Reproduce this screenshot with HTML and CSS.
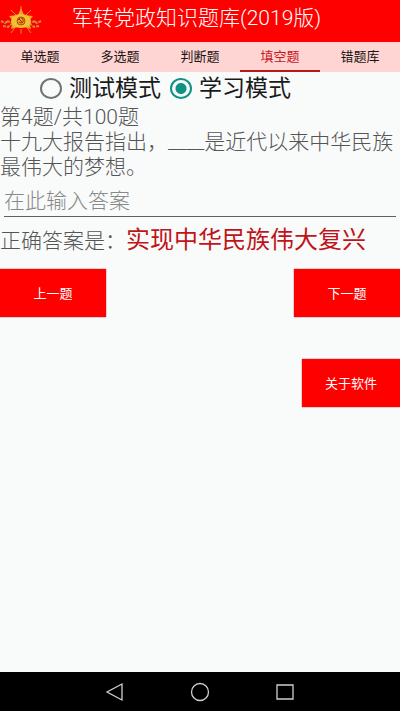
FILE: index.html
```html
<!DOCTYPE html>
<html lang="zh-CN">
<head>
    <meta charset="UTF-8">
    <meta name="viewport" content="width=device-width, initial-scale=1.0">
    <title>军转党政知识题库(2019版)</title>
    <link rel="stylesheet" href="styles.css">
</head>
<body>
    <header class="app-bar">
        <svg class="logo" viewBox="0 0 42 32" aria-hidden="true">
            <g fill="none" stroke="#d08a3c" stroke-width="2" stroke-dasharray="3 1">
                <path d="M1 19l4 2 3-2M3 24l5 1 4-3M7 19l5 2"/>
                <path d="M41 19l-4 2-3-2M39 24l-5 1-4-3M35 19l-5 2"/>
            </g>
            <path fill="none" stroke="#d98a2c" d="M21 4v6M11 8l5 5M31 8l-5 5M11 31l5-7M31 31l-5-7M21 32v-5"/>
            <path fill="#e8a32c" d="M21 6l3 7 9 1-4 5 2 8-10-3-10 3 2-8-4-5 9-1z"/>
            <ellipse cx="21" cy="19" rx="10" ry="7" fill="#f4c030"/>
            <circle cx="21" cy="19" r="4" fill="#e8a01c" stroke="#a8501a"/>
            <path d="M19 17l4 4M18 18l2-2M21 16c3 0 3 5 0 5l-2-1" fill="none" stroke="#b02a10"/>
        </svg>
        <h1>军转党政知识题库(2019版)</h1>
    </header>

    <nav class="tabs">
        <a href="#single">单选题</a>
        <a href="#multiple">多选题</a>
        <a href="#judge">判断题</a>
        <a href="#blank" class="active">填空题</a>
        <a href="#wrong">错题库</a>
    </nav>

    <main class="content">
        <div class="modes">
            <label><input type="radio" name="mode" value="test">测试模式</label>
            <label><input type="radio" name="mode" value="study" checked>学习模式</label>
        </div>

        <p class="question">第4题/共100题</p>
        <label class="question" for="answer">十九大报告指出，____是近代以来中华民族最伟大的梦想。</label>
        <div class="answer-field">
            <input type="text" id="answer" placeholder="在此输入答案">
        </div>
        <p class="result">正确答案是：<span class="correct">实现中华民族伟大复兴</span></p>

        <div class="pager">
            <button type="button">上一题</button>
            <button type="button">下一题</button>
        </div>
        <div class="about">
            <button type="button">关于软件</button>
        </div>
    </main>

    <footer class="nav-bar">
        <button type="button" aria-label="返回">
            <svg viewBox="0 0 20 20"><path d="M17 2v16L2 10z"/></svg>
        </button>
        <button type="button" aria-label="主页">
            <svg viewBox="0 0 20 20"><circle cx="10" cy="10" r="8.5"/></svg>
        </button>
        <button type="button" aria-label="最近任务">
            <svg viewBox="0 0 20 20"><path d="M2 3h16v14H2z"/></svg>
        </button>
    </footer>
</body>
</html>
```

FILE: styles.css
```css
* { box-sizing: border-box; }
body {
    display: flex;
    flex-direction: column;
    min-height: 100vh;
    margin: 0;
    background: #f9fbfb;
    color: #555;
    font-family: Roboto, "Noto Sans CJK SC", sans-serif;
    font-size: 21px;
    font-weight: 300;
}
h1, p { margin: 0; }
button, input { font-family: inherit; }
button { border: none; cursor: pointer; }

.app-bar {
    display: flex;
    align-items: center;
    gap: 30px;
    height: 42px;
    padding-bottom: 6px;
    background: #fe0000;
    color: #fff;
}
.app-bar h1 { font-size: 21px; font-weight: 300; line-height: 24px; }
.logo { width: 42px; height: 32px; }

.tabs { display: flex; height: 30px; background: #ffd5d3; }
.tabs a {
    flex: 1;
    border-bottom: 2px solid transparent;
    color: #1c1414;
    font-size: 13px;
    font-weight: 400;
    line-height: 30px;
    text-align: center;
    text-decoration: none;
}
.tabs .active { border-color: #b8181c; color: #c8171b; }

.content { flex: 1; }
.modes { display: flex; gap: 9px; height: 33px; padding-left: 40px; }
.modes label {
    display: flex;
    align-items: center;
    gap: 7px;
    color: #1a1a1a;
    font-size: 23px;
    font-weight: 400;
    line-height: 33px;
}
.modes input {
    appearance: none;
    width: 22px;
    height: 21px;
    margin: 0;
    border: 2px solid #737373;
    border-radius: 50%;
}
.modes input:checked {
    border-color: #0f9184;
    background: radial-gradient(circle, #0f9184 5px, transparent 6px);
}

.question { display: block; line-height: 25px; }
.answer-field { padding: 8px 4px 0; }
.answer-field input {
    display: block;
    width: 100%;
    height: 29px;
    padding: 0 0 2px;
    border: none;
    border-bottom: 1px solid #5c6060;
    background: none;
    font-size: 21px;
    font-weight: 300;
    outline: none;
}
.answer-field input::placeholder { color: #888; opacity: 1; }
.result { padding-top: 8px; line-height: 30px; }
.correct { color: #c01418; font-size: 24px; font-weight: 400; }

.pager { display: flex; justify-content: space-between; padding-top: 13px; }
.about { display: flex; justify-content: flex-end; padding-top: 42px; }
.pager button, .about button {
    width: 106px;
    height: 48px;
    padding-bottom: 3px;
    background: #fe0000;
    box-shadow: 0 0 1px #800000;
    color: #fff;
    font-size: 13px;
}
.about button { width: 98px; }

.nav-bar {
    display: flex;
    align-items: center;
    justify-content: center;
    gap: 65px;
    height: 39px;
    background: #000;
}
.nav-bar button { padding: 0; background: none; }
.nav-bar svg {
    display: block;
    width: 20px;
    height: 20px;
    fill: none;
    stroke: #cfcfcf;
    stroke-width: 1.3;
}
```
